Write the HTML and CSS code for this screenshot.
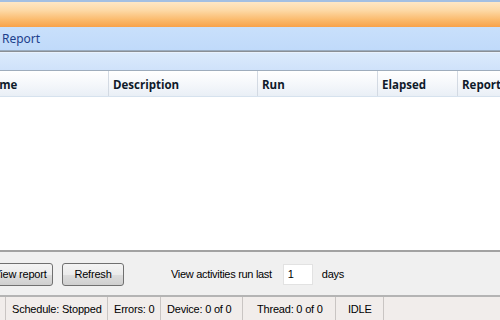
FILE: index.html
```html
<!DOCTYPE html>
<html>
<head>
<meta charset="utf-8">
<link rel="stylesheet" href="styles.css">
</head>
<body>
<div class="app">
  <div class="topline"></div>
  <div class="ribbon"></div>
  <div class="tabbar"><span class="tab">Report</span></div>
  <div class="divider"></div>
  <div class="band"></div>
  <div class="grid">
    <div class="grid-head">
      <div class="col c1">Name</div>
      <div class="col c2">Description</div>
      <div class="col c3">Run</div>
      <div class="col c4">Elapsed</div>
      <div class="col c5">Report</div>
    </div>
    <div class="grid-body"></div>
  </div>
  <div class="panel">
    <button class="btn btn-view">View report</button>
    <button class="btn btn-refresh">Refresh</button>
    <span class="label">View activities run last</span>
    <input class="days" type="text" value="1">
    <span class="label days-label">days</span>
  </div>
  <div class="status">
    <div class="cell s0"></div>
    <div class="cell s1">Schedule: Stopped</div>
    <div class="cell s2">Errors: 0</div>
    <div class="cell s3">Device: 0 of 0</div>
    <div class="cell s4">Thread: 0 of 0</div>
    <div class="cell s5">IDLE</div>
    <div class="cell s6"></div>
  </div>
</div>
</body>
</html>
```
FILE: styles.css
```css
* { box-sizing: border-box; }
html, body { margin: 0; padding: 0; }
body { width: 500px; height: 320px; overflow: hidden; background: #fff; }
.app { width: 500px; height: 320px; display: flex; flex-direction: column; overflow: hidden; }

.topline { height: 2px; background: #a3bfe2; flex: none; }
.ribbon {
  height: 25px; flex: none;
  background: linear-gradient(#fee7c6 0%, #fdd8a4 35%, #fbbb6e 70%, #f8a24a 100%);
}
.tabbar {
  height: 23px; flex: none;
  background: linear-gradient(#c9e0fb, #c0dafa);
  display: flex; align-items: center;
  padding-left: 2px;
}
.tab {
  font-family: "Noto Sans", "Open Sans", sans-serif;
  font-size: 12px; color: #1d3f8c;
}
.divider {
  height: 3px; flex: none;
  background: linear-gradient(#9aacbf 0 1px, #8a8f95 1px 2px, #e8f1fc 2px 3px);
}
.band {
  height: 18px; flex: none;
  background: linear-gradient(#dbeafc, #cfe2fa);
  border-bottom: 1px solid #9eacbc;
}
.grid { flex: 1; display: flex; flex-direction: column; background: #fff; }
.grid-head {
  height: 26px; flex: none;
  display: grid;
  grid-template-columns: 131px 149px 120px 80px 80px;
  margin-left: -22px;
  background: linear-gradient(#ffffff, #f3f6fa 60%, #e9eff6);
  border-bottom: 1px solid #d6e2ee;
}
.col {
  font-family: "Open Sans", "Noto Sans", sans-serif;
  font-weight: 700; font-size: 11.5px; color: #0f1a2a;
  display: flex; align-items: center;
  padding-left: 4px; padding-top: 1px;
  border-right: 1px solid #d3dae3;
  white-space: nowrap; overflow: hidden;
}
.c1 { padding-left: 5px; }
.grid-body { flex: 1; background: #fff; }

.panel {
  height: 45px; flex: none;
  background: #f0f0f0;
  border-top: 2px solid #a2a2a2;
  display: flex; align-items: center;
  padding-top: 1px;
  font-family: "Liberation Sans", Arial, sans-serif;
  font-size: 11px; letter-spacing: -0.3px; color: #000;
}
.btn {
  height: 23px;
  font-family: "Liberation Sans", Arial, sans-serif;
  font-size: 11px; letter-spacing: -0.2px; color: #000;
  border: 1px solid #707070; border-radius: 3px;
  background: linear-gradient(#f4f4f4, #ebebeb 50%, #dddddd 51%, #cfcfcf);
  padding: 0;
}
.btn-view { width: 75px; margin-left: -22px; padding-left: 9px; }
.btn-refresh { width: 62px; margin-left: 9px; }
.label { margin-left: 47px; }
.days {
  width: 30px; height: 21px; margin-left: 11px;
  border: 1px solid #e2e2e2; background: #fff;
  font-family: "Liberation Sans", Arial, sans-serif;
  font-size: 11px; padding: 0 0 0 4px;
}
.days-label { margin-left: 9px; }

.status {
  height: 25px; flex: none;
  background: #f1edeb;
  border-top: 2px solid #b4b4b4;
  display: flex;
  font-family: "Liberation Sans", Arial, sans-serif;
  font-size: 11px; letter-spacing: -0.2px; color: #000;
}
.cell {
  display: flex; align-items: center;
  border-right: 1px solid #c9c5c3;
  padding-left: 6px; white-space: nowrap;
}
.s0 { width: 6px; padding: 0; }
.s1 { width: 102px; }
.s2 { width: 53px; }
.s3 { width: 82px; }
.s4 { width: 93px; padding-left: 14px; }
.s5 { width: 48px; padding-left: 12px; }
.s6 { flex: 1; border-right: none; }
```
